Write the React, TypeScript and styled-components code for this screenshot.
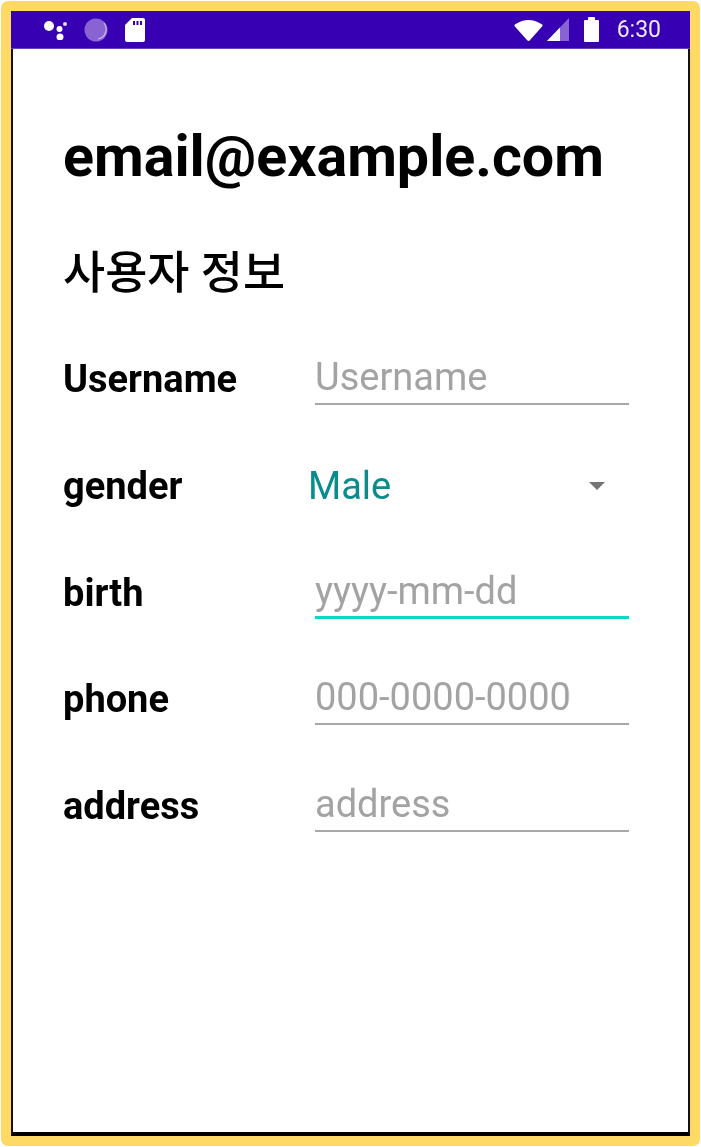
import React from 'react';
import styled, {createGlobalStyle} from 'styled-components';

const GlobalStyle = createGlobalStyle`
    html, body {
        margin: 0;
        padding: 0;
        background: #fff;
    }
    body {
        font-family: Roboto, "Noto Sans CJK KR", sans-serif;
    }
`

type FieldProps = {
    label: string
    placeholder: string
    focused?: boolean
}

const fields: FieldProps[] = [
    {label: 'birth', placeholder: 'yyyy-mm-dd', focused: true},
    {label: 'phone', placeholder: '000-0000-0000'},
    {label: 'address', placeholder: 'address'},
]

const Field = (props: FieldProps) => (
    <Row>
        <Label>{props.label}</Label>
        <InputBox $focused={props.focused}>
            <Placeholder>{props.placeholder}</Placeholder>
        </InputBox>
    </Row>
)

const StatusBar = () => (
    <Bar>
        <BarGroup $gap={17}>
            <svg width="23" height="20" viewBox="0 0 23 20">
                <circle cx="5" cy="6" r="5" fill="#fff"/>
                <circle cx="15.5" cy="9" r="3" fill="#fff"/>
                <circle cx="21" cy="4" r="2" fill="#e4d9f5"/>
                <circle cx="16" cy="17" r="3.5" fill="#fff"/>
            </svg>
            <svg width="24" height="24" viewBox="0 0 24 24">
                <circle cx="12" cy="12" r="11.5" fill="#8a63d2"/>
                <path d="M20 5 A10 10 0 0 1 14 21" fill="none" stroke="#c9b8ea" strokeWidth="1.2"/>
            </svg>
            <svg width="20" height="24" viewBox="0 0 20 24">
                <path d="M7 0 H18 a2 2 0 0 1 2 2 V22 a2 2 0 0 1 -2 2 H2 a2 2 0 0 1 -2 -2 V7 Z" fill="#fff"/>
                <path d="M8 3 h2 v4 h-2 z M11.5 3 h2 v4 h-2 z M15 3 h2 v4 h-2 z" fill="#3700b3"/>
            </svg>
        </BarGroup>
        <BarGroup $gap={15}>
            <SignalGroup>
                <svg width="29" height="24" viewBox="0 0 29 24">
                    <path d="M2 7.5 Q14.5 -0.5 27 7.5 L14.5 21.5 Z" fill="#fff" stroke="#fff" strokeWidth="3" strokeLinejoin="round"/>
                </svg>
                <svg width="22" height="23" viewBox="0 0 22 23">
                    <path d="M0 23 L22 0 V23 Z" fill="#8a63d2"/>
                    <path d="M0 23 L13 9.4 V23 Z" fill="#fff"/>
                </svg>
            </SignalGroup>
            <svg width="15" height="25" viewBox="0 0 15 25">
                <path d="M4 3 V1 a1 1 0 0 1 1 -1 H10 a1 1 0 0 1 1 1 V3 H14 a1 1 0 0 1 1 1 V24 a1 1 0 0 1 -1 1 H1 a1 1 0 0 1 -1 -1 V4 a1 1 0 0 1 1 -1 Z" fill="#fff"/>
            </svg>
            <Clock>6:30</Clock>
        </BarGroup>
    </Bar>
)

const App = () => {
    return (
        <Frame>
            <GlobalStyle/>
            <Screen>
                <StatusBar/>
                <Content>
                    <Email>email@example.com</Email>
                    <Heading>사용자 정보</Heading>
                    <Form>
                        <Field label="Username" placeholder="Username"/>
                        <Row>
                            <Label>gender</Label>
                            <Select>
                                <SelectValue>Male</SelectValue>
                                <Caret/>
                            </Select>
                        </Row>
                        {fields.map(f => <Field key={f.label} {...f}/>)}
                    </Form>
                </Content>
            </Screen>
        </Frame>
    );
};

export default App;

const Frame = styled.div`
    box-sizing: border-box;
    width: 699px;
    height: 1145px;
    margin: 1px;
    padding: 10px;
    background: #ffd966;
    border-radius: 7px;
    display: flex;
`

const Screen = styled.div`
    flex: 1;
    display: flex;
    flex-direction: column;
    background: #fff;
    border-left: 2px solid #111;
    border-right: 2px solid #111;
    border-bottom: 4px solid #000;
`

const Bar = styled.div`
    box-sizing: border-box;
    height: 38px;
    margin-left: -2px;
    margin-right: -2px;
    padding: 0 29px 0 33px;
    background: #3700b3;
    border-bottom: 1px solid #6a3fc4;
    display: flex;
    align-items: center;
    justify-content: space-between;
`

const BarGroup = styled.div<{$gap: number}>`
    display: flex;
    align-items: center;
    gap: ${props => props.$gap}px;
    filter: blur(0.4px);
`

const SignalGroup = styled.div`
    display: flex;
    align-items: center;
    gap: 4px;
`

const Clock = styled.span`
    margin-left: 3px;
    color: #eee8f8;
    font-size: 23px;
    line-height: 1;
`

const Content = styled.div`
    padding: 73px 0 0 50px;
    filter: blur(0.4px);
`

const Email = styled.h1`
    margin: 0;
    color: #000;
    font-size: 57.4px;
    line-height: 70px;
    font-weight: 700;
`

const Heading = styled.h2`
    margin: 54px 0 0;
    color: #000;
    font-size: 45.8px;
    line-height: 56px;
    font-weight: 500;
`

const Form = styled.div`
    margin-top: 24px;
    display: flex;
    flex-direction: column;
`

const Row = styled.div`
    height: 106.7px;
    display: flex;
    align-items: center;
`

const Label = styled.div`
    width: 252px;
    color: #000;
    font-size: 38px;
    font-weight: 700;
`

const InputBox = styled.div<{$focused?: boolean}>`
    box-sizing: border-box;
    width: 314px;
    height: 52px;
    padding-top: 3px;
    border-bottom: ${props => props.$focused ? '3px solid #03dac5' : '2px solid #a8a8a8'};
`

const Placeholder = styled.span`
    color: #a3a3a3;
    font-size: 38px;
    line-height: 42px;
`

const Select = styled.div`
    width: 315px;
    margin-left: -7px;
    display: flex;
    align-items: center;
    justify-content: space-between;
`

const SelectValue = styled.span`
    color: #0a8c8a;
    font-size: 38px;
    line-height: 42px;
`

const Caret = styled.span`
    margin-right: 18px;
    width: 0;
    height: 0;
    border-left: 8px solid transparent;
    border-right: 8px solid transparent;
    border-top: 8px solid #757575;
`
